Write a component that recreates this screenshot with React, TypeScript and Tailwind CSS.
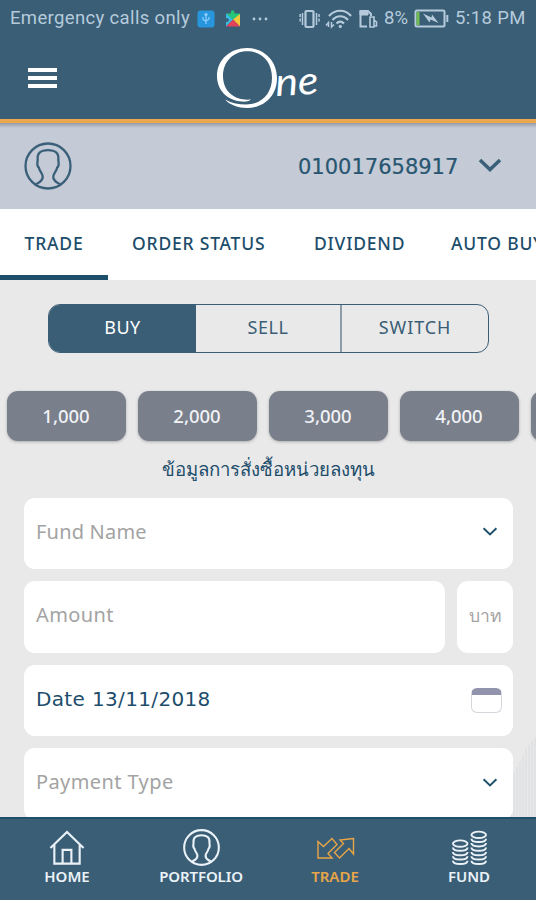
import type { ReactNode } from 'react'

const chips = ['1,000', '2,000', '3,000', '4,000', '5,000']

function Chevron({ className }: { className: string }) {
  return (
    <svg viewBox="0 0 24 14" className={className} fill="none" stroke="currentColor">
      <path d="M2 2L12 11.5L22 2" />
    </svg>
  )
}

function Person({ className }: { className: string }) {
  return (
    <svg viewBox="0 0 48 48" className={className} fill="none" stroke="currentColor" strokeLinejoin="round">
      <circle cx="24" cy="24" r="22.5" />
      <path d="M11.500 42.500C15 40 19 39.500 18.700 34.500C18.500 31 15.500 29.500 14.800 25.500C12.500 24 13.300 21 13.700 18C12.800 11 17 8.200 24 8.200C31 8.200 35.200 11 34.300 18C34.700 21 35.500 24 33.200 25.500C32.500 29.500 29.500 31 29.300 34.500C29 39.500 33 40 36.500 42.500" />
    </svg>
  )
}

function Field({ children }: { children: ReactNode }) {
  return (
    <div className="flex h-[71.5px] shrink-0 items-center justify-between rounded-[11px] bg-white pl-3 pr-3 pb-[3px] text-[20px] tracking-[0.2px] text-[#a3a3a3]">
      {children}
    </div>
  )
}

function StatusBar() {
  return (
    <div className="flex h-[37px] items-center pl-[10px] pr-[10px] font-[Roboto] text-[18.5px] text-[#b5cbdc]">
      <span className="w-[187px] whitespace-nowrap tracking-[0.35px]">Emergency calls only</span>
      <svg width="18" height="18" viewBox="0 0 18 18">
        <rect x="0.5" y="0.5" width="17" height="17" rx="3" fill="#2796dc" />
        <path d="M9 14V5M6 7v2.5l3 2M12 7v2l-3 2" stroke="#8fd0ff" strokeWidth="1.2" fill="none" />
        <circle cx="9" cy="4.5" r="1.6" fill="#8fd0ff" />
      </svg>
      <svg className="ml-[10px]" width="17" height="19" viewBox="0 0 17 19">
        <path d="M1 4.5H6C5 0 10 0 9.5 4.5H15V10L8 10.5Z" fill="#27c777" />
        <path d="M1 4.5L8 10.5L1 17.5V13C5 13 5 9 1 9Z" fill="#35bfe6" />
        <path d="M15 5V17.5L8 10.5Z" fill="#f5c93b" />
        <path d="M1 17.5L8 10.5L15 17.5Z" fill="#e2435a" />
      </svg>
      <svg className="ml-[10px]" width="16" height="4" viewBox="0 0 16 4" fill="currentColor">
        <circle cx="2" cy="2" r="1.4" />
        <circle cx="8" cy="2" r="1.4" />
        <circle cx="14" cy="2" r="1.4" />
      </svg>
      <svg className="ml-[31px]" width="22" height="20" viewBox="0 0 22 20" fill="none" stroke="currentColor">
        <rect x="6.5" y="2" width="8" height="16" rx="1" strokeWidth="2.2" />
        <path d="M3.500 4v12M17.500 4v12" strokeWidth="1.5" />
        <path d="M1.200 5v9M20 5v9" strokeWidth="1.5" strokeDasharray="3 1.5" />
      </svg>
      <svg className="ml-[4px]" width="28" height="20" viewBox="0 0 28 20" fill="none" stroke="currentColor" strokeWidth="2.2">
        <path d="M4 7C10 0 20.500 0 26 7M7.500 11C12 6 18.500 6 23 11M11.500 14.500C14 12 16.500 12 19 14.500" />
        <circle cx="15.300" cy="17.500" r="1.200" fill="currentColor" strokeWidth="1" />
        <path d="M1 16.500L3.500 13.500V18M6.500 13V18L9 15.500" strokeWidth="1.500" />
      </svg>
      <svg className="ml-[6px]" width="19" height="20" viewBox="0 0 19 20" fill="none" stroke="currentColor" strokeWidth="2">
        <path d="M8 17.500H1.500V2H9L12 5V7" />
        <path d="M1 2H9V6H1Z" fill="currentColor" strokeWidth="1" />
        <path d="M11 18V8H15V18ZM15 11L17.500 13V17H15" strokeWidth="1.600" />
      </svg>
      <span className="ml-[6px] w-[30px] whitespace-nowrap text-[18.5px]">8%</span>
      <svg width="35" height="19" viewBox="0 0 35 19" fill="none" stroke="currentColor">
        <rect x="1.500" y="1.500" width="29" height="16" rx="1.500" strokeWidth="2" />
        <path d="M33.300 6V13" strokeWidth="2" />
        <rect x="2.500" y="3" width="3" height="13" fill="#72bd52" stroke="none" />
        <path d="M9 4.500L17.500 8.500L18 5.500L24.500 14L16.500 10.500L15.500 13.500Z" fill="currentColor" stroke="none" />
      </svg>
      <span className="ml-[6px] whitespace-nowrap tracking-[0.4px]">5:18 PM</span>
    </div>
  )
}

function Header() {
  return (
    <header className="h-[123px] shrink-0 border-b-[4px] border-[#eda84f] bg-[#3a5e76]">
      <StatusBar />
      <div className="flex h-[82px] items-start">
        <div className="ml-[28px] mt-[30.5px] flex w-[29px] flex-col gap-[4px]">
          <i className="h-[4px] bg-white" />
          <i className="h-[4px] bg-white" />
          <i className="h-[4px] bg-white" />
        </div>
        <svg className="ml-[159px] mt-[8px]" width="110" height="66" viewBox="0 0 110 66">
          <path
            fill="white"
            fillRule="evenodd"
            d="M31 3C48 3 61 16 61 33C61 51 48 63 31 63C22 63 14 60 9 54.500C16 58.500 23 59.500 30 59.500C46 59.500 56 48 56 33C56 17 46 6.200 31 6.200C17 6.200 7 17 7 31C7 46 18 56 35 54.500C33 56.500 29 56.800 26 56.600C11 55.500 1 45 1 31C1 14 15 3 31 3Z"
          />
          <text x="60" y="51" fill="white" fontFamily="Lato" fontStyle="italic" fontSize="39" textLength="43" lengthAdjust="spacingAndGlyphs" transform="rotate(-3 60 51)">
            ne
          </text>
        </svg>
      </div>
    </header>
  )
}

function App() {
  return (
    <div className="flex h-[900px] w-[536px] flex-col overflow-hidden bg-[#e9e9e9] font-['Noto_Sans','Liberation_Sans',sans-serif] text-[#1d4d6b]">
      <Header />

      {/* Account */}
      <div className="flex h-[86px] shrink-0 items-center bg-[#c4cad6] bg-linear-to-b from-[#929ba7] to-[#c4cad6] to-[5px] pl-[24px]">
        <Person className="h-[48px] w-[48px] stroke-[2.3] text-[#3a6079]" />
        <span className="ml-[226px] mt-[4px] w-[180px] font-['DejaVu_Sans'] text-[21px] text-[#285670] [-webkit-text-stroke:0.2px]">010017658917</span>
        <Chevron className="mb-0.5 h-[14px] w-[24px] stroke-[3.5] text-[#3a6079]" />
      </div>

      {/* Tabs */}
      <nav className="flex h-[71px] shrink-0 gap-[24px] whitespace-nowrap bg-white text-[17.5px] font-medium tracking-[0.8px]">
        <div className="flex w-[108px] shrink-0 justify-center border-b-[5px] border-[#1d4f6a] pt-[21px]">TRADE</div>
        <div className="w-[158px] shrink-0 pt-[21px]">ORDER STATUS</div>
        <div className="w-[113px] shrink-0 pt-[21px]">DIVIDEND</div>
        <div className="shrink-0 pt-[21px]">AUTO BUY</div>
      </nav>

      {/* Buy / sell / switch */}
      <div className="mx-[48px] mt-[24px] flex h-[49px] w-[441px] shrink-0 overflow-hidden rounded-[12px] border-[1.5px] border-[#3a5e76] text-[18px] tracking-[0.5px] text-[#3a5e76]">
        <div className="flex w-[147px] items-center justify-center bg-[#3a5e76] pb-[2px] text-white">BUY</div>
        <div className="flex w-[146px] items-center justify-center border-r-2 border-[#8b9ba8] pb-[2px]">SELL</div>
        <div className="flex flex-1 items-center justify-center pb-[2px] tracking-[0.9px]">SWITCH</div>
      </div>

      <div className="mt-[38px] flex h-[50px] shrink-0 gap-[12px] pl-[6.5px]">
        {chips.map((c) => (
          <div key={c} className="flex w-[119px] shrink-0 items-center justify-center rounded-[11px] bg-[#797f8b] pb-px text-[18.5px] font-medium text-[#f0f2f5] shadow-[0_1px_3px_#aaa]">
            {c}
          </div>
        ))}
      </div>

      <h2 className="mt-[14px] h-[42.5px] shrink-0 whitespace-nowrap text-center text-[18.6px] font-medium leading-[28px]">ข้อมูลการสั่งซื้อหน่วยลงทุน</h2>

      {/* Order form */}
      <main className="relative flex min-h-0 flex-1 flex-col gap-[12px] overflow-hidden pl-[24px] pr-[23px]">
        <svg className="absolute bottom-0 right-0" width="27" height="80" viewBox="0 0 27 80" fill="none" stroke="#d3d7da" strokeWidth="1">
          <path d="M2 80V42M5 80V36M8 80V30M11 80V24M14 80V18M17 80V12M20 80V8M23 80V4M26 80V0" opacity="0.8" />
        </svg>
        <Field>
          <span>Fund Name</span>
          <Chevron className="mr-[3px] h-[9px] w-[16px] stroke-[3] text-[#1d4f6a]" />
        </Field>
        <div className="grid shrink-0 grid-cols-[421px_56px] gap-[12px]">
          <Field>
            <span className="tracking-[0.4px]">Amount</span>
          </Field>
          <Field>
            <span className="whitespace-nowrap text-[17.5px]">บาท</span>
          </Field>
        </div>
        <Field>
          <span className="font-['DejaVu_Sans'] text-[20px] tracking-[0.35px] text-[#1d4d6b]">Date 13/11/2018</span>
          <div className="mt-1 -mr-px h-[25px] w-[31px] rounded-[6px] border border-[#d5d5dc] border-t-[7px] border-t-[#9293ad]" />
        </Field>
        <div className="relative">
          <Field>
            <span className="tracking-[0.4px]">Payment Type</span>
            <Chevron className="mr-[3px] h-[9px] w-[16px] stroke-[3] text-[#1d4f6a]" />
          </Field>
        </div>
      </main>

      {/* Bottom navigation */}
      <footer className="grid h-[83px] shrink-0 grid-cols-4 border-t-2 border-[#1e506b] bg-[#3a5e76] text-[15px] font-semibold leading-[20px] text-[#eaf2f8]">
        <div className="flex flex-col items-center pt-[10px]">
          <svg width="38" height="37" viewBox="0 0 38 38" fill="none" stroke="currentColor" strokeWidth="2.2">
            <path d="M2 19.500L19 3L36 19.500M6 16V35.500H32V16M14.500 35V21.500H23.500V35" />
          </svg>
          HOME
        </div>
        <div className="flex flex-col items-center pt-[10px]">
          <Person className="h-[37px] w-[37px] stroke-[2.7]" />
          <span className="tracking-[-0.1px]">PORTFOLIO</span>
        </div>
        <div className="flex flex-col items-center pt-[10px] text-[#e8a547]">
          <svg width="40" height="37" viewBox="0 1 40 37" fill="none" stroke="currentColor" strokeWidth="1.4">
            <path d="M3 13.500V30H17L13 25.500L22 16.500L17 10.500L8.500 18.500Z" />
            <path d="M38.500 10.500L25 12L28.500 15.500L19.500 24.500L24.500 30L34 20.500L38.500 26Z" />
          </svg>
          TRADE
        </div>
        <div className="flex flex-col items-center pt-[10px]">
          <svg width="38" height="37" viewBox="0 0 38 38" fill="none" stroke="currentColor" strokeWidth="2">
            <ellipse cx="10" cy="15" rx="7.500" ry="3.300" />
            <ellipse cx="29" cy="6" rx="7.500" ry="3.300" />
            <path d="M2.500 19C2.500 23.500 17.500 23.500 17.500 19M2.500 23.500C2.500 28 17.500 28 17.500 23.500M2.500 28C2.500 32.500 17.500 32.500 17.500 28M2.500 32.500C2.500 37 17.500 37 17.500 32.500" />
            <path d="M21.500 10C21.500 14.500 36.500 14.500 36.500 10M21.500 14.500C21.500 19 36.500 19 36.500 14.500M21.500 19C21.500 23.500 36.500 23.500 36.500 19M21.500 23.500C21.500 28 36.500 28 36.500 23.500M21.500 28C21.500 32.500 36.500 32.500 36.500 28M21.500 32.500C21.500 37 36.500 37 36.500 32.500" />
          </svg>
          FUND
        </div>
      </footer>
    </div>
  )
}

export default App
